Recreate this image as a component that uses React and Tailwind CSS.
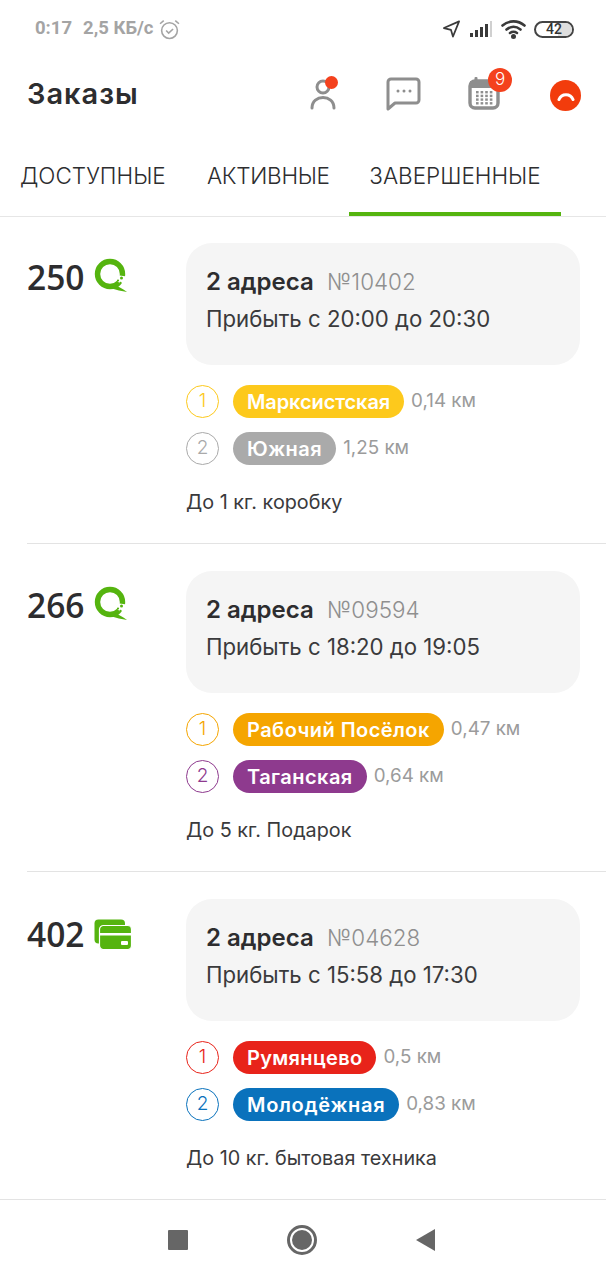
const F = { fontFamily: '"Inter", "Noto Sans", sans-serif' };

const QiwiIcon = () => (
  <svg width="34" height="36" viewBox="0 0 34 36" className="block">
    <circle cx="16" cy="16" r="12.5" fill="none" stroke="#55b40f" strokeWidth="5.4" strokeDasharray="71 7.5" strokeDashoffset="-9.5" />
    <path d="M19 26 C24 28 29 31 33 34 C28 33 22 32 16 30 Z" fill="#55b40f" />
    <circle cx="27.5" cy="20" r="1.5" fill="#55b40f" />
    <circle cx="24" cy="22.5" r="1.1" fill="#55b40f" />
    <circle cx="26.5" cy="25" r="1.2" fill="#55b40f" />
  </svg>
);

const CardIcon = () => (
  <svg width="38" height="31" viewBox="0 0 38 31" className="block mt-[4px]">
    <rect x="0.5" y="0.5" width="30.5" height="24" rx="4" fill="#55b40f" />
    <rect x="5.5" y="6.5" width="32" height="24" rx="4" fill="#55b40f" stroke="#fff" strokeWidth="1.2" />
    <rect x="6" y="14" width="31" height="2.5" fill="#fff" />
    <rect x="27" y="22" width="7" height="4" rx="1" fill="#fff" />
  </svg>
);

const Order = ({ rowClass, priceClass, price, icon, num, time, a, b, desc }) => (
  <div className={'flex ml-[27px] ' + rowClass}>
    <div className={'w-[159px] shrink-0 flex items-start gap-[10px] ' + priceClass}>
      <span className="text-[33.5px] leading-[42px] font-semibold text-[#2d2d2f]" style={{ fontFamily: '"Open Sans", sans-serif' }}>{price}</span>
      <span className="mt-[2px]">{icon}</span>
    </div>
    <div className="flex-1 pr-[26px]" style={F}>
      <div className="h-[122px] rounded-[26px] bg-[#f5f5f5] px-[20px] pt-[21px]">
        <div className="flex items-baseline leading-[36px]">
          <span className="text-[24px] font-semibold text-[#2d2d2f] w-[121px]">2 адреса</span>
          <span className="text-[22.4px] font-light text-[#8f8f8f]">№{num}</span>
        </div>
        <div className="text-[22.2px] leading-[38px] text-[#3a3a3c]">{time}</div>
      </div>
      <div className="mt-[20px] flex flex-col gap-[14px]">
        {[a, b].map((s, i) => (
          <div key={i} className="flex items-center h-[33px]">
            <div className={'w-[33px] h-[33px] rounded-full border-[1.5px] bg-white flex items-center justify-center text-[19px] font-light ' + s.ring}>{i + 1}</div>
            <div className={'ml-[14px] h-[33px] rounded-full px-[14px] flex items-center text-[20px] font-semibold text-white ' + s.pill}>{s.n}</div>
            <div className="ml-[7px] text-[18.8px] text-[#9b9b9b]">{s.d}</div>
          </div>
        ))}
      </div>
      <div className="mt-[23px] text-[19.8px] leading-[28px] text-[#3a3a3c]">{desc}</div>
    </div>
  </div>
);

export default function App() {
  return (
    <div className="w-[606px] h-[1280px] bg-white overflow-hidden flex flex-col">
      <div className="h-[58px] flex items-center pl-[35px] pr-[32px] text-[#a4a4a4] font-bold text-[18.5px]" style={{ fontFamily: 'Roboto, sans-serif' }}>
        <span>0:17</span>
        <span className="ml-[11px]">2,5 КБ/с</span>
        <svg width="21" height="21" viewBox="0 0 20 20" className="ml-[5px]" fill="none" stroke="#a4a4a4" strokeWidth="1.5">
          <circle cx="10" cy="11" r="7.5" />
          <path d="M6.8 11 L9.2 13.4 L13.4 9.5" />
          <path d="M1 4.5 L4.5 1.5 M19 4.5 L15.5 1.5" />
        </svg>
        <div className="ml-auto flex items-center">
          <svg width="19" height="20" viewBox="0 0 20 20" fill="none" stroke="#3a3a3a" strokeWidth="1.8" strokeLinejoin="round">
            <path d="M18 2 L2 9 L9.5 11 L11.5 18 Z" />
          </svg>
          <svg width="24" height="18" viewBox="0 0 24 18" className="ml-[8px]">
            <rect x="1" y="13" width="3" height="4" fill="#3a3a3a" />
            <rect x="6" y="10" width="3" height="7" fill="#3a3a3a" />
            <rect x="11" y="7" width="3" height="10" fill="#3a3a3a" />
            <rect x="16" y="4" width="3" height="13" fill="#3a3a3a" />
            <rect x="21" y="1" width="2" height="16" fill="#d0d0d0" />
          </svg>
          <svg width="26" height="20" viewBox="0 0 26 20" className="ml-[8px]" fill="none" stroke="#3a3a3a" strokeWidth="2.6" strokeLinecap="round">
            <path d="M1.5 6.5 C8 1 17 1 23.5 6.5" />
            <path d="M5.5 10.5 C10 7 15 7 19.5 10.5" />
            <path d="M9 14 C11 12.6 14 12.6 16 14" />
            <circle cx="12.5" cy="17.5" r="1.2" fill="#3a3a3a" />
          </svg>
          <div className="relative ml-[7px] w-[40px] h-[17px] rounded-full border-2 border-[#444] flex items-center justify-center overflow-hidden">
            <div className="absolute right-0 top-0 bottom-0 w-[14px] bg-[#dedede]" />
            <span className="relative text-[14px] font-medium text-[#333] leading-none">42</span>
          </div>
        </div>
      </div>

      <div className="h-[72px] flex items-center pl-[27px]" style={F}>
        <span className="text-[29px] tracking-[1px] font-semibold text-[#2d2d2f]">Заказы</span>
        <div className="ml-auto flex items-center h-full pr-[25px]">
          <div className="relative w-[34px] h-[40px] mr-[46px]">
            <svg width="34" height="40" viewBox="0 0 34 40" fill="none" stroke="#8e8e8e" strokeWidth="3">
              <circle cx="17" cy="13" r="6" />
              <path d="M6 34 C6 20 28 20 28 34" strokeLinecap="round" />
            </svg>
            <div className="absolute top-[2px] left-[19px] w-[13px] h-[13px] rounded-full bg-[#f4411d]" />
          </div>
          <svg width="36" height="34" viewBox="0 0 36 34" className="mr-[46px]" fill="none">
            <path d="M5 2 H30 A3 3 0 0 1 33 5 V23 A3 3 0 0 1 30 26 H9 L2 32 V5 A3 3 0 0 1 5 2 Z" stroke="#8e8e8e" strokeWidth="3" strokeLinejoin="round" />
            <circle cx="12" cy="14" r="1.5" fill="#8e8e8e" />
            <circle cx="18" cy="14" r="1.5" fill="#8e8e8e" />
            <circle cx="24" cy="14" r="1.5" fill="#8e8e8e" />
          </svg>
          <div className="relative w-[32px] h-[36px] mr-[50px]">
            <svg width="32" height="36" viewBox="0 0 32 36">
              <rect x="6.5" y="1" width="3" height="6" rx="1" fill="#8e8e8e" />
              <rect x="2" y="5" width="28" height="27" rx="5" fill="none" stroke="#8e8e8e" strokeWidth="3.4" />
              <rect x="2" y="5" width="28" height="7" fill="#8e8e8e" />
              {[0, 1, 2, 3].map((r) => [0, 1, 2, 3].map((c) => (
                <rect key={r + '-' + c} x={8 + c * 4.6} y={15 + r * 3.7} width="2.6" height="2.4" fill="#8e8e8e" />
              )))}
            </svg>
            <div className="absolute -top-[8px] left-[20px] w-[24px] h-[24px] rounded-full bg-[#f4411d] text-white text-[17px] font-light flex items-center justify-center">9</div>
          </div>
          <div className="w-[31px] h-[31px] mt-[3px] rounded-full bg-[#f23c0c] flex items-center justify-center">
            <svg width="18" height="10" viewBox="0 0 18 10" fill="none" stroke="#fff" strokeWidth="3" strokeLinecap="round">
              <path d="M2 8.5 A7.5 7.5 0 0 1 16 8.5" />
            </svg>
          </div>
        </div>
      </div>

      <div className="h-[87px] flex border-b border-[#e6e6e6] text-[22.5px] font-light leading-[28px] text-[#2d2d2f] pl-[20px]" style={F}>
        <div className="pt-[32px] w-[146px] whitespace-nowrap">ДОСТУПНЫЕ</div>
        <div className="pt-[32px] ml-[41px] tracking-[-0.3px] w-[122px] whitespace-nowrap">АКТИВНЫЕ</div>
        <div className="ml-[20px] w-[212px] text-center pt-[32px] h-[86px] border-b-[4px] border-[#55b40f] whitespace-nowrap">ЗАВЕРШЕННЫЕ</div>
      </div>

      <Order rowClass="h-[327px] pt-[26px] border-b border-[#e3e3e3]" priceClass="pt-[13px]" price="250" icon={<QiwiIcon />} num="10402" time="Прибыть с 20:00 до 20:30"
        a={{ n: 'Марксистская', d: '0,14 км', ring: 'border-[#fdc91c] text-[#fdc91c]', pill: 'bg-[#fdc91c] tracking-[-0.1px]' }}
        b={{ n: 'Южная', d: '1,25 км', ring: 'border-[#aaaaaa] text-[#aaaaaa]', pill: 'bg-[#aaaaaa] tracking-[0.5px]' }} desc="До 1 кг. коробку" />
      <Order rowClass="h-[328px] pt-[27px] border-b border-[#e3e3e3]" priceClass="pt-[13px]" price="266" icon={<QiwiIcon />} num="09594" time="Прибыть с 18:20 до 19:05"
        a={{ n: 'Рабочий Посёлок', d: '0,47 км', ring: 'border-[#f5a500] text-[#f5a500]', pill: 'bg-[#f5a500] tracking-[0.45px]' }}
        b={{ n: 'Таганская', d: '0,64 км', ring: 'border-[#8e3a8e] text-[#8e3a8e]', pill: 'bg-[#8e3a8e] tracking-[0.45px]' }} desc="До 5 кг. Подарок" />
      <Order rowClass="h-[327px] pt-[27px]" priceClass="pt-[14px]" price="402" icon={<CardIcon />} num="04628" time="Прибыть с 15:58 до 17:30"
        a={{ n: 'Румянцево', d: '0,5 км', ring: 'border-[#e8231a] text-[#e8231a]', pill: 'bg-[#e8231a] tracking-[0.33px]' }}
        b={{ n: 'Молодёжная', d: '0,83 км', ring: 'border-[#0a72bc] text-[#0a72bc]', pill: 'bg-[#0a72bc] tracking-[0.7px]' }} desc="До 10 кг. бытовая техника" />

      <div className="flex-1 flex items-center justify-center gap-[99px] pr-[2px] border-t border-[#e3e3e3]">
        <div className="w-[20px] h-[20px] bg-[#666] rounded-[1px]" />
        <div className="w-[30px] h-[30px] rounded-full border-[3px] border-[#666] flex items-center justify-center">
          <div className="w-[20px] h-[20px] rounded-full bg-[#666]" />
        </div>
        <svg width="20" height="22" viewBox="0 0 20 22"><path d="M0 11 L19 0 V22 Z" fill="#666" /></svg>
      </div>
    </div>
  );
}
